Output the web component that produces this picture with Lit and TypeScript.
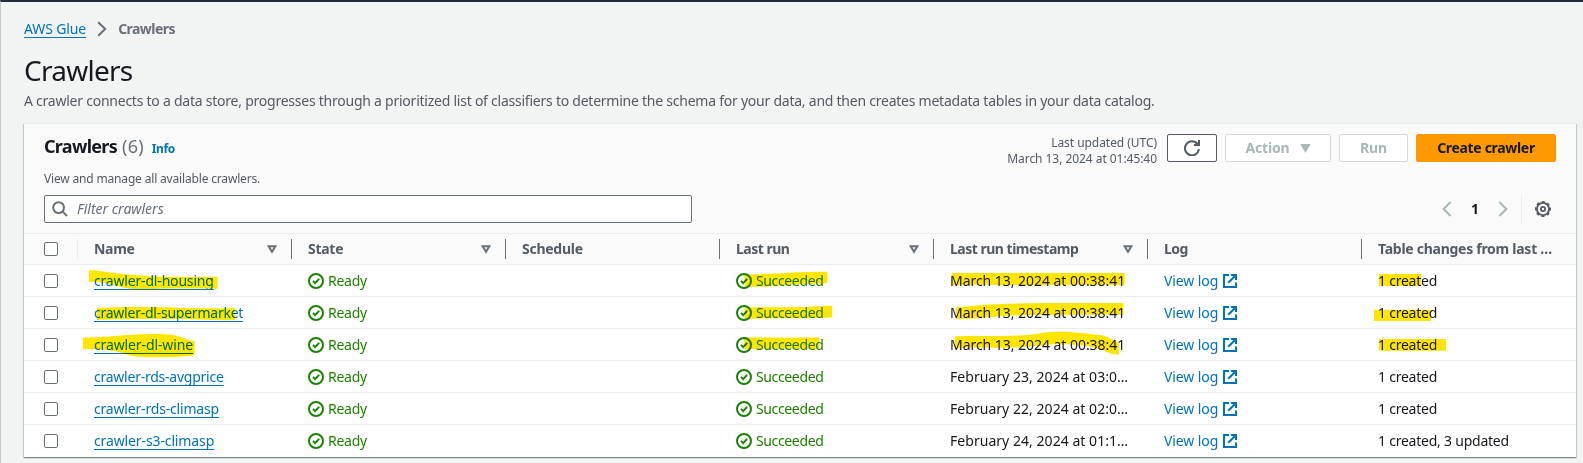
import { LitElement, html, svg, css, nothing } from "lit";
import { customElement } from "lit/decorators.js";

interface Crawler {
  name: string;
  nameClass: string;
  timestamp: string;
  changes: string;
}

const crawlers: Crawler[] = [
  { name: "crawler-dl-housing", nameClass: "n1", timestamp: "March 13, 2024 at 00:38:41", changes: "1 created" },
  { name: "crawler-dl-supermarket", nameClass: "n2", timestamp: "March 13, 2024 at 00:38:41", changes: "1 created" },
  { name: "crawler-dl-wine", nameClass: "n3", timestamp: "March 13, 2024 at 00:38:41", changes: "1 created" },
  { name: "crawler-rds-avgprice", nameClass: "n2", timestamp: "February 23, 2024 at 03:0…", changes: "1 created" },
  { name: "crawler-rds-climasp", nameClass: "n1", timestamp: "February 22, 2024 at 02:0…", changes: "1 created" },
  { name: "crawler-s3-climasp", nameClass: "n3", timestamp: "February 24, 2024 at 01:1…", changes: "1 created, 3 updated" },
];

const columns = [
  { label: "Name", sortable: true, cls: "" },
  { label: "State", sortable: true, cls: "" },
  { label: "Schedule", sortable: false, cls: "" },
  { label: "Last run", sortable: true, cls: "tight" },
  { label: "Last run timestamp", sortable: true, cls: "tight" },
  { label: "Log", sortable: false, cls: "tight" },
  { label: "Table changes from last …", sortable: false, cls: "" },
];

const checkIcon = html`<svg class="ico16" viewBox="0 0 16 16" fill="none" stroke="currentColor" stroke-width="2">
  <circle cx="8" cy="8" r="7"></circle><path d="M5 7.9l2.2 2.2 4-4.2"></path></svg>`;

const externalIcon = html`<svg class="ico14" viewBox="0 0 14 14" fill="none" stroke="currentColor" stroke-width="2">
  <path d="M6 1H1v12h12V8.4M8 1h5v5M13 1L5.2 8.8"></path></svg>`;

const sortIcon = html`<svg class="sort" viewBox="0 0 10 9" fill="none" stroke="currentColor" stroke-width="2">
  <path d="M1.6 1.2h6.8L5 6.8z"></path></svg>`;

/* Marker strokes; each group is drawn at triple scale. */
const marks = [
  {
    x: 0,
    paths: [
      "M267 120C310 122 350 132 410 136C470 140 520 142 653 140L652 176C560 175 480 176 420 178C380 178 350 168 320 160C300 156 285 157 267 156Z",
      "M291 234C350 230 440 230 500 232C560 235 640 236 706 235L705 270C640 272 560 266 500 267C430 267 340 267 291 270Z",
      "M249 323C310 322 350 316 400 314C450 312 490 311 520 315C545 320 560 330 584 334L584 376C550 380 520 382 480 382C440 382 410 382 390 376C360 366 330 360 300 358L249 357Z",
    ],
  },
  {
    x: 700,
    paths: [
      "M132 134C200 133 290 125 382 125L382 160C330 162 260 163 215 168C190 171 160 171 136 170Z",
      "M134 232C200 232 280 232 330 230C355 229 370 227 396 227L396 262C370 264 350 264 320 265C260 265 200 264 134 267Z",
      "M131 322C200 323 290 324 358 322L358 356C290 357 200 355 134 358Z",
      "M755 129L1274 129L1274 166C1200 162 1080 165 980 165C900 165 820 162 755 166Z",
      "M768 232C830 226 870 222 920 221C1020 218 1150 219 1270 219L1270 254C1180 254 1040 254 950 256C880 258 840 268 768 267Z",
      "M764 319C830 317 930 320 990 314C1030 309 1040 305 1070 305C1120 305 1170 311 1205 316C1230 322 1240 333 1256 337L1257 374C1235 374 1220 366 1200 357C1160 344 1110 342 1060 343C1010 348 960 354 900 353C850 353 800 350 766 357Z",
    ],
  },
  { x: 1130, paths: ["M747 132H873V168H747Z", "M732 239H903V273H732Z", "M747 327H948V362H747Z"] },
];

@customElement("app-root")
export class AppRoot extends LitElement {
  static styles = css`
    :host { display: block; }
    * { box-sizing: border-box; }
    .page {
      position: relative; height: 463px; overflow: hidden; background: #f2f3f3;
      border-top: 2px solid #232f3e; border-left: 1px solid #c3c8c8;
      padding: 16px 7px 0 23px; color: #16191f;
      font: 14px/22px "Noto Sans", "Open Sans", sans-serif;
    }
    svg { display: block; flex: none; }
    .crumbs { display: flex; align-items: center; height: 22px; color: #687078; }
    .crumbs svg { margin: 0 11px 0 11px; }
    .crumbs b { letter-spacing: -0.55px; }
    a { color: #0073bb; text-decoration: none; }
    .u { text-decoration: underline 1px; text-underline-offset: 3px; text-decoration-skip-ink: none; letter-spacing: -0.12px; }
    h1, h2, p { margin: 0; }
    h1 { font-size: 28px; line-height: 36px; font-weight: 400; letter-spacing: -0.75px; margin-top: 12px; }
    .desc { color: #545b64; margin-top: 2px; letter-spacing: -0.24px; white-space: nowrap; }
    .panel {
      margin-top: 11px; height: 334px; background: #fff; border-top: 1px solid #eaeded;
      box-shadow: 0 1px 1px 0 rgba(0,28,36,.3), 1px 1px 1px 0 rgba(0,28,36,.15), -1px 1px 1px 0 rgba(0,28,36,.15);
    }
    .top { height: 110px; background: #fafafa; border-bottom: 1px solid #eaeded; padding: 9px 20px 0; }
    .head { display: flex; justify-content: space-between; height: 36px; }
    .title { display: flex; align-items: baseline; height: 28px; }
    h2 { font-size: 18px; line-height: 26px; letter-spacing: -0.7px; }
    .count { font-size: 18px; line-height: 26px; color: #687078; margin-left: 5px; letter-spacing: 0.2px; }
    .info { font-size: 12px; font-weight: 700; margin-left: 8px; letter-spacing: -0.4px; }
    .actions { display: flex; align-items: flex-start; gap: 8px; padding-top: 1px; }
    .updated { font-size: 12px; line-height: 16px; color: #545b64; text-align: right; margin: 1px 2px 0 0; letter-spacing: -0.05px; }
    .btn {
      display: flex; align-items: center; justify-content: center; height: 28px; border: 1px solid #d5dbdb;
      border-radius: 2px; background: #fff; color: #aab7b8; font-weight: 700; letter-spacing: -0.2px;
    }
    .refresh { width: 50px; border-color: #545b64; color: #545b64; }
    .action { width: 106px; gap: 11px; padding-left: 1px; }
    .run { width: 69px; }
    .create { width: 140px; background: #ff9900; border-color: #ff9900; color: #16191f; letter-spacing: -0.32px; }
    .sub { font-size: 12px; line-height: 18px; color: #545b64; margin-top: 1px; height: 18px; letter-spacing: -0.17px; }
    .tools { display: flex; justify-content: space-between; margin-top: 7px; }
    .filter {
      display: flex; align-items: center; width: 648px; height: 28px; border: 1px solid #687078; border-radius: 2px;
      background: #fff; color: #687078; font-style: italic; padding-left: 7px; gap: 9px;
    }
    .pager { display: flex; align-items: center; height: 28px; color: #aab7b8; }
    .pager b { color: #16191f; width: 46px; text-align: center; }
    .gear { height: 28px; display: flex; align-items: center; border-left: 1px solid #eaeded; margin-left: 13px; padding: 0 5px 0 13px; color: #545b64; }
    .row {
      display: grid; grid-template-columns: 54px repeat(7, 214px); height: 32px; align-items: center;
      border-bottom: 1px solid #eaeded; white-space: nowrap;
    }
    .row:last-child { border-bottom: 0; }
    .hrow { height: 31px; background: #fafafa; color: #545b64; font-weight: 700; }
    .sel { padding-left: 20px; height: 20px; display: flex; align-items: center; }
    .box { width: 14px; height: 14px; border: 1px solid #687078; border-radius: 2px; background: #fff; }
    .hrow .sel { border-right: 1px solid #eaeded; }
    .th { display: flex; align-items: center; justify-content: space-between; height: 20px; padding: 0 14px 0 16px; border-right: 1px solid #687078; letter-spacing: -0.27px; }
    .th:last-child { border-right: 0; padding-right: 0; }
    .tight { letter-spacing: -0.5px; }
    .sort { width: 10px; height: 9px; color: #687078; }
    .td { display: flex; align-items: center; padding-left: 16px; }
    .n1 { letter-spacing: -0.18px; }
    .n2 { letter-spacing: -0.24px; }
    .n3 { letter-spacing: -0.12px; }
    .ok { color: #1d8102; gap: 4px; letter-spacing: -0.36px; }
    .ready { letter-spacing: -0.25px; }
    .ico16 { width: 16px; height: 16px; }
    .ico14 { width: 14px; height: 14px; }
    .log { gap: 5px; color: #0073bb; letter-spacing: -0.1px; }
    .stamp { letter-spacing: 0.04px; }
    .march { letter-spacing: -0.04px; }
    .changes { letter-spacing: -0.23px; }
    .marker { position: absolute; left: -1px; top: -2px; mix-blend-mode: multiply; pointer-events: none; }
  `;

  render() {
    return html`
      <div class="page">
        <div class="crumbs">
          <a class="u">AWS Glue</a>
          <svg width="10" height="16" viewBox="0 0 10 16" fill="none" stroke="#687078" stroke-width="2"><path d="M1.2 1.2L8.2 8l-7 6.8"></path></svg>
          <b>Crawlers</b>
        </div>
        <h1>Crawlers</h1>
        <p class="desc">A crawler connects to a data store, progresses through a prioritized list of classifiers to determine the schema for your data, and then creates metadata tables in your data catalog.</p>
        <section class="panel">
          <div class="top">
            <div class="head">
              <div class="title"><h2>Crawlers</h2><span class="count">(6)</span><a class="info">Info</a></div>
              <div class="actions">
                <div class="updated">Last updated (UTC)<br>March 13, 2024 at 01:45:40</div>
                <div class="btn refresh">
                  <svg width="16" height="16" viewBox="0 0 16 16" fill="none" stroke="currentColor" stroke-width="2"><path d="M14.9 9.2A7 7 0 1 1 13.6 4.2M15 0v5h-5"></path></svg>
                </div>
                <div class="btn action">Action<svg width="11" height="9" viewBox="0 0 11 9" fill="currentColor"><path d="M.3 0h10.4L5.5 9z"></path></svg></div>
                <div class="btn run">Run</div>
                <div class="btn create">Create crawler</div>
              </div>
            </div>
            <p class="sub">View and manage all available crawlers.</p>
            <div class="tools">
              <div class="filter">
                <svg width="16" height="16" viewBox="0 0 16 16" fill="none" stroke="currentColor" stroke-width="2"><circle cx="6.6" cy="6.6" r="5.4"></circle><path d="M10.6 10.6l4.4 4.4"></path></svg>
                Filter crawlers
              </div>
              <div class="pager">
                <svg width="10" height="16" viewBox="0 0 10 16" fill="none" stroke="currentColor" stroke-width="2"><path d="M8.6 1L1.6 8l7 7"></path></svg>
                <b>1</b>
                <svg width="10" height="16" viewBox="0 0 10 16" fill="none" stroke="currentColor" stroke-width="2"><path d="M1.4 1l7 7-7 7"></path></svg>
                <div class="gear">
                  <svg width="16" height="16" viewBox="0 0 16 16" fill="none" stroke="currentColor">
                    <circle cx="8" cy="8" r="6.1" stroke-width="1.9"></circle>
                    <circle cx="8" cy="8" r="7.2" stroke-width="1.6" stroke-dasharray="3.2 2.455" stroke-dashoffset="1.6"></circle>
                    <circle cx="8" cy="8" r="2.1" stroke-width="1.8"></circle>
                  </svg>
                </div>
              </div>
            </div>
          </div>
          <div class="row hrow">
            <div class="sel"><span class="box"></span></div>
            ${columns.map((c) => html`<div class="th ${c.cls}"><span>${c.label}</span>${c.sortable ? sortIcon : nothing}</div>`)}
          </div>
          ${crawlers.map((c) => html`
            <div class="row">
              <div class="sel"><span class="box"></span></div>
              <div class="td"><a class="u ${c.nameClass}">${c.name}</a></div>
              <div class="td ok ready">${checkIcon}Ready</div>
              <div class="td"></div>
              <div class="td ok">${checkIcon}Succeeded</div>
              <div class="td stamp ${c.timestamp.startsWith("March") ? "march" : ""}">${c.timestamp}</div>
              <div class="td log">View log${externalIcon}</div>
              <div class="td changes">${c.changes}</div>
            </div>`)}
        </section>
        <svg class="marker" width="1583" height="463" viewBox="0 0 1583 463" fill="#ffe600">
          ${marks.map((m) => svg`<g transform="translate(${m.x} 230) scale(0.33333)">${m.paths.map((d) => svg`<path d=${d}></path>`)}</g>`)}
        </svg>
      </div>`;
  }
}
